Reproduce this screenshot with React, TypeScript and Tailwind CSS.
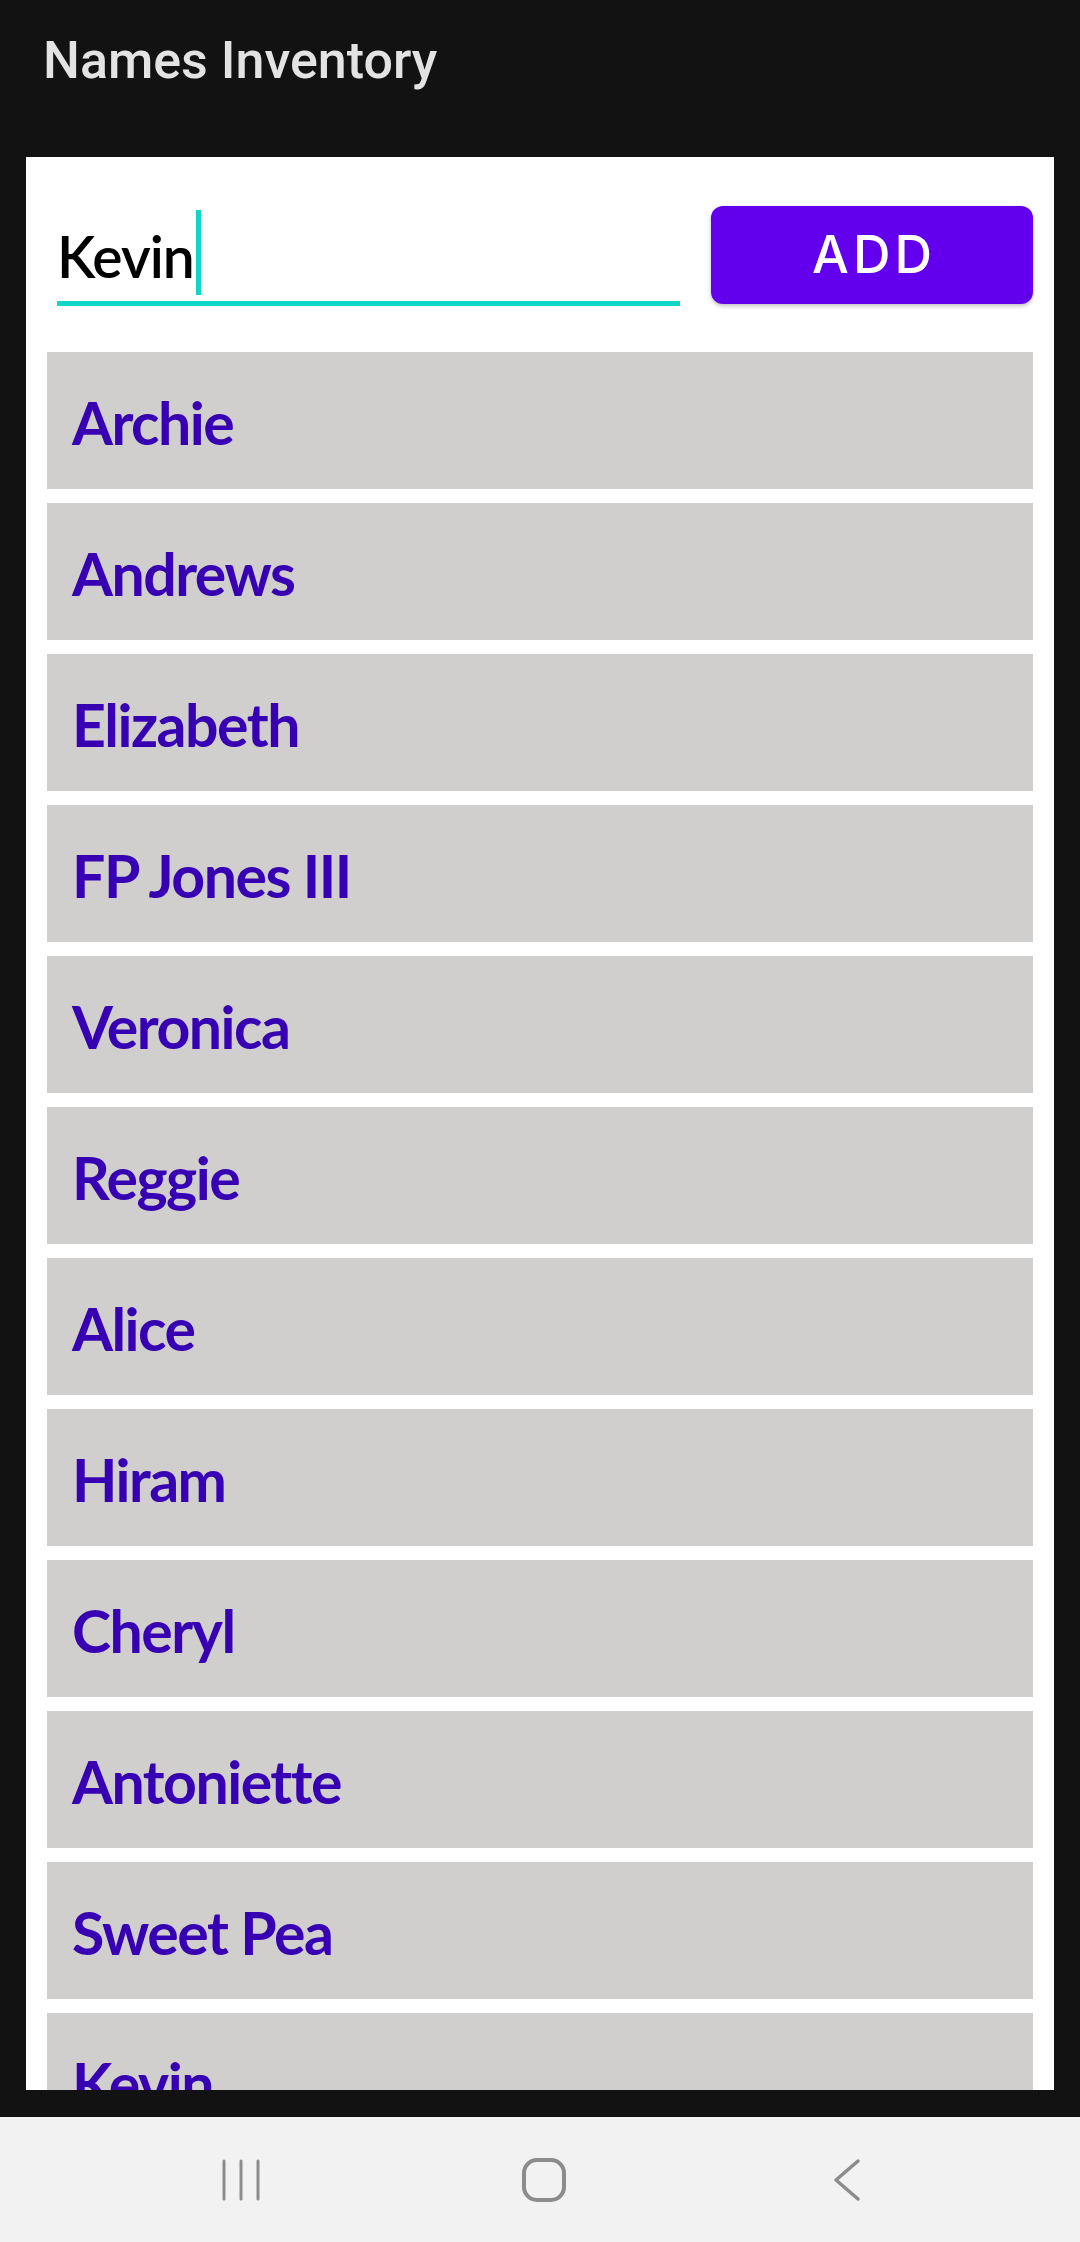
import React from "react";

const names = [
  "Archie",
  "Andrews",
  "Elizabeth",
  "FP Jones III",
  "Veronica",
  "Reggie",
  "Alice",
  "Hiram",
  "Cheryl",
  "Antoniette",
  "Sweet Pea",
  "Kevin",
];

function NavBar() {
  return (
    <div className="h-[125px] bg-[#f2f2f2] flex items-center justify-center gap-[243px] pl-[8px]">
      {/* recents */}
      <svg width="60" height="44" viewBox="0 0 60 44" className="text-[#8c8c8c]">
        <g stroke="currentColor" strokeWidth="3" strokeLinecap="round">
          <line x1="13" y1="3" x2="13" y2="41" />
          <line x1="30" y1="3" x2="30" y2="41" />
          <line x1="47" y1="3" x2="47" y2="41" />
        </g>
      </svg>
      {/* home */}
      <svg width="60" height="44" viewBox="0 0 60 44" className="text-[#8c8c8c]">
        <rect x="10" y="2" width="40" height="40" rx="13" fill="none" stroke="currentColor" strokeWidth="4" />
      </svg>
      {/* back */}
      <svg width="60" height="44" viewBox="0 0 60 44" className="text-[#8c8c8c]">
        <polyline points="41,3 19,22 41,41" fill="none" stroke="currentColor" strokeWidth="3.5" strokeLinecap="round" strokeLinejoin="round" />
      </svg>
    </div>
  );
}

export default function App() {
  return (
    <div className="w-[1080px] h-[2242px] bg-[#121212] flex flex-col overflow-hidden">
      {/* toolbar */}
      <div className="h-[157px] shrink-0 px-[43px] pt-[35px]">
        <h1 className="text-[52px] leading-none font-medium text-[#e3e3e3] font-['Roboto',sans-serif]">
          Names Inventory
        </h1>
      </div>

      {/* content card */}
      <div className="flex-1 mx-[26px] mb-[27px] bg-white px-[21px] overflow-hidden min-h-0">
        <div className="flex items-start">
          <div className="ml-[10px] w-[623px] mt-[53px] flex flex-col">
            <div className="h-[91px] flex items-start">
              <span className="mt-[17px] text-[57px] leading-[58px] font-semibold tracking-[-1px] text-black font-['Lato',sans-serif]">
                Kevin
              </span>
              <span className="w-[5px] h-[85px] bg-[#0fd6c6] ml-[2px]" />
            </div>
            <div className="h-[5px] bg-[#0fd6c6]" />
          </div>
          <button className="ml-auto mt-[49px] w-[322px] h-[98px] rounded-[12px] bg-[#6200ee] shadow-[0_2px_4px_rgba(0,0,0,0.25)] flex items-center justify-center">
            <span className="text-white text-[52px] leading-none font-medium tracking-[4px] pl-[4px] font-['Inter',sans-serif]">
              ADD
            </span>
          </button>
        </div>

        <ul className="mt-[46px] flex flex-col gap-[14px]">
          {names.map((n) => (
            <li key={n} className="h-[137px] shrink-0 bg-[#d0cfcd] flex items-center pl-[25px] pt-[4px]">
              <span className="text-[59px] leading-none font-bold tracking-[-1.5px] text-[#3700b3] font-['Lato',sans-serif]">
                {n}
              </span>
            </li>
          ))}
        </ul>
      </div>

      <NavBar />
    </div>
  );
}
